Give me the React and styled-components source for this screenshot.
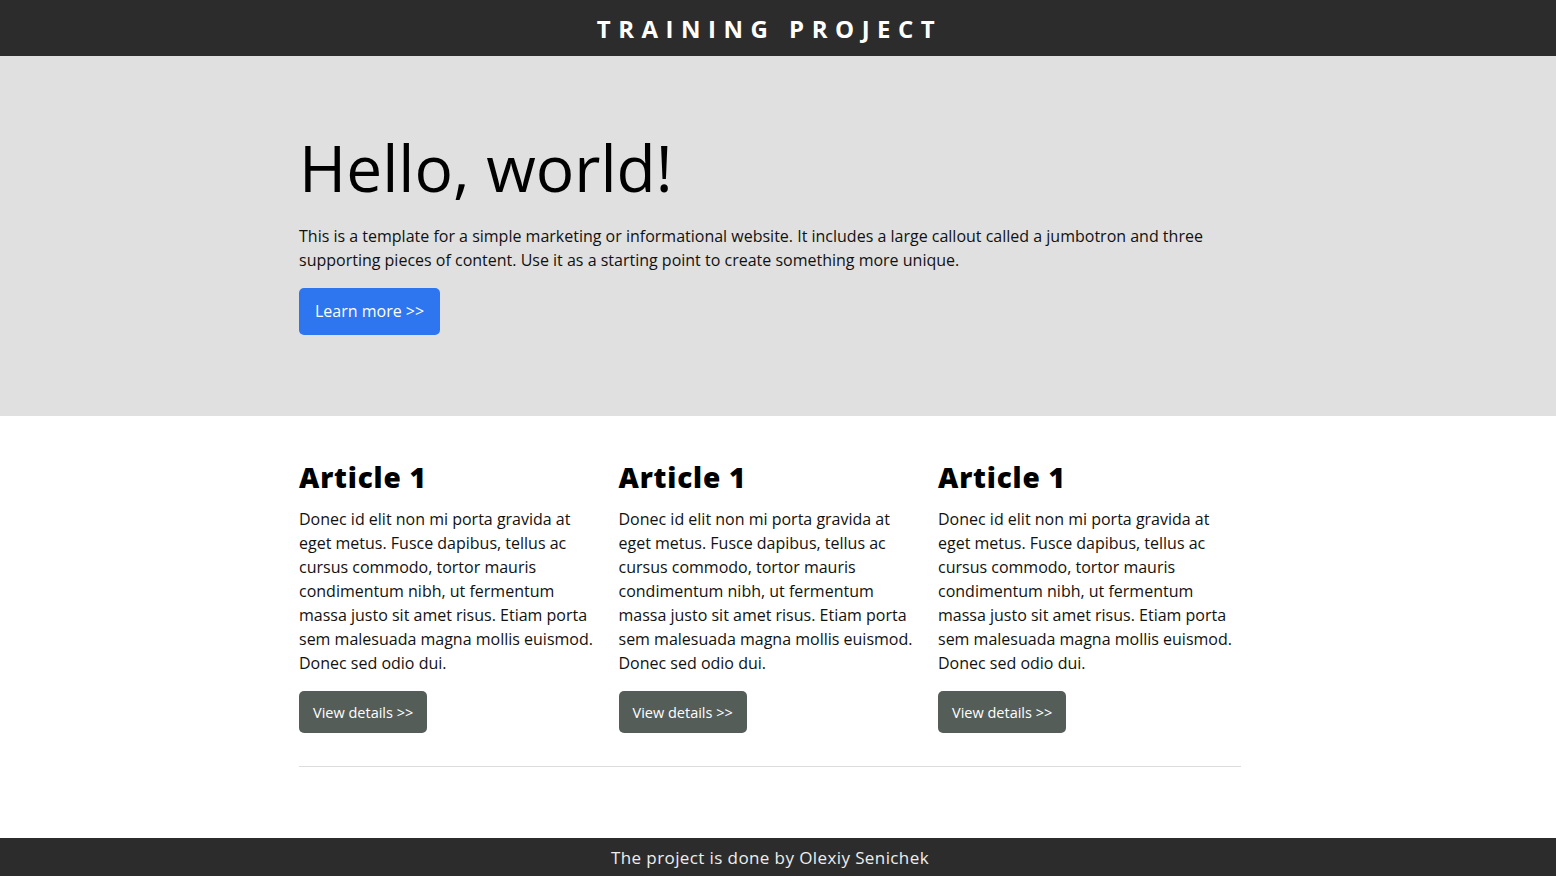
import React from 'react';
import styled, { createGlobalStyle } from 'styled-components';

const GlobalStyle = createGlobalStyle`
  html, body {
    margin: 0;
    padding: 0;
  }
  body {
    font-family: 'Open Sans', 'Liberation Sans', sans-serif;
    color: #111;
    background: #fff;
  }
  * {
    box-sizing: border-box;
  }
`;

const Page = styled.div`
  display: flex;
  flex-direction: column;
  min-height: 876px;
`;

const Header = styled.header`
  display: flex;
  align-items: center;
  justify-content: center;
  height: 56px;
  padding-right: 16px;
  background-color: #2c2c2c;

  h1 {
    margin: 0 0 0 -1px;
    font-size: 24px;
    font-weight: 700;
    letter-spacing: 7.5px;
    color: #fff;
    text-transform: uppercase;
  }
`;

const Container = styled.div`
  width: 942px;
  margin-left: calc(50% - 479px);
`;

const Jumbotron = styled.section`
  height: 360px;
  padding-top: 74px;
  background-color: #e0e0e0;
`;

const Title = styled.h2`
  margin: 0 0 17px;
  font-size: 64px;
  font-weight: 400;
  line-height: 1.2;
  color: #000;
`;

const Lead = styled.p`
  margin: 0 0 16px;
  font-size: 16px;
  line-height: 24px;
  color: #111;
`;

const Button = styled.a`
  display: inline-flex;
  align-items: center;
  height: ${(p) => (p.$primary ? '47px' : '42px')};
  padding: 0 ${(p) => (p.$primary ? '16px' : '14px')};
  border-radius: 5px;
  font-size: ${(p) => (p.$primary ? '16px' : '14.5px')};
  color: #fff;
  text-decoration: none;
  background-color: ${(p) => (p.$primary ? '#2e75f0' : '#555d59')};
  cursor: pointer;
`;

const Main = styled.main`
  flex: 1;
  padding-top: 43px;
`;

const Articles = styled.div`
  display: grid;
  grid-template-columns: repeat(3, 303px);
  column-gap: 16.5px;
`;

const Article = styled.article`
  h3 {
    margin: 0 0 12px;
    font-size: 28px;
    font-weight: 800;
    letter-spacing: 0.8px;
    line-height: 36px;
    color: #000;
  }

  p {
    margin: 0 0 16px;
    font-size: 16px;
    line-height: 24px;
    color: #111;
  }
`;

const Divider = styled.hr`
  margin: 33px 0 0;
  border: 0;
  border-top: 1px solid #dcdcdc;
`;

const Footer = styled.footer`
  display: flex;
  align-items: center;
  justify-content: center;
  height: 38px;
  padding-right: 16px;
  background-color: #2c2c2c;
  color: #eee;
  font-size: 17px;
  letter-spacing: 0.4px;
`;

const text =
  'Donec id elit non mi porta gravida at eget metus. Fusce dapibus, tellus ac cursus commodo, tortor mauris condimentum nibh, ut fermentum massa justo sit amet risus. Etiam porta sem malesuada magna mollis euismod. Donec sed odio dui.';

const App = () => {
  return (
    <Page>
      <GlobalStyle />
      <Header>
        <h1>Training project</h1>
      </Header>
      <Jumbotron>
        <Container>
          <Title>Hello, world!</Title>
          <Lead>
            This is a template for a simple marketing or informational website. It includes a large
            callout called a jumbotron and three supporting pieces of content. Use it as a starting
            point to create something more unique.
          </Lead>
          <Button $primary>Learn more &gt;&gt;</Button>
        </Container>
      </Jumbotron>
      <Main>
        <Container>
          <Articles>
            {[1, 2, 3].map((n) => (
              <Article key={n}>
                <h3>Article 1</h3>
                <p>{text}</p>
                <Button>View details &gt;&gt;</Button>
              </Article>
            ))}
          </Articles>
          <Divider />
        </Container>
      </Main>
      <Footer>The project is done by Olexiy Senichek</Footer>
    </Page>
  );
};

export default App;
